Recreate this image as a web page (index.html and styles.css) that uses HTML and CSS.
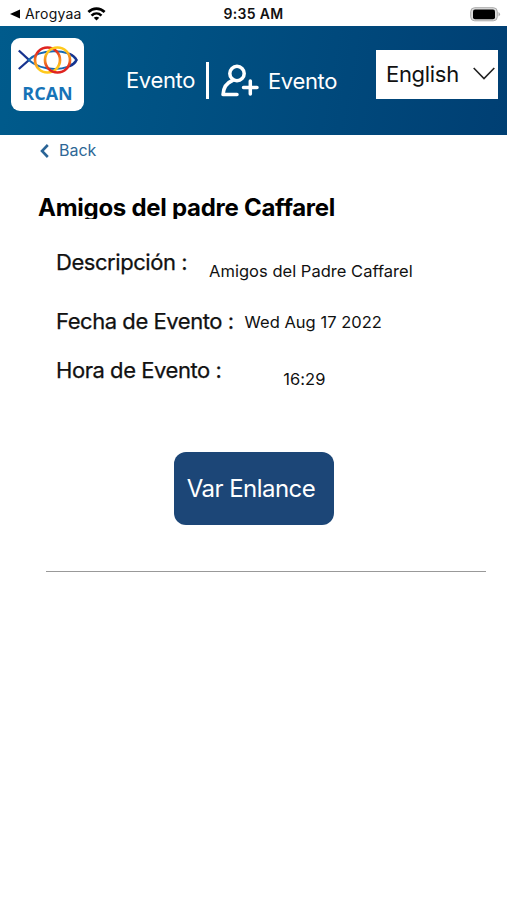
FILE: index.html
```html
<!DOCTYPE html>
<html lang="es">
<head>
    <meta charset="UTF-8">
    <meta name="viewport" content="width=device-width, initial-scale=1">
    <title>Evento</title>
    <link rel="stylesheet" href="styles.css">
</head>
<body>
    <!-- Phone status bar -->
    <div class="status-bar">
        <div class="status-left">
            <svg width="10" height="10" viewBox="0 0 10 10"><path d="M0 5L10 0.5V9.5Z"/></svg>
            <span class="carrier">Arogyaa</span>
            <svg class="wifi" width="19" height="14" viewBox="0 0 20 15" fill="none" stroke="#000" stroke-width="2.8">
                <path d="M1.3 5.4C6.2 0.5 13.8 0.5 18.7 5.4"/>
                <path d="M4.7 9.2C7.8 6.2 12.2 6.2 15.3 9.2"/>
                <path d="M10 14.5L7 11.5Q10 9.2 13 11.5Z" fill="#000" stroke="none"/>
            </svg>
        </div>
        <span class="clock">9:35 AM</span>
        <svg class="battery" width="31" height="15" viewBox="0 0 31 15">
            <rect x="0.7" y="0.7" width="26.6" height="13.1" rx="4" fill="#ddd" stroke="#aaa"/>
            <rect x="3" y="2.5" width="22" height="9.8" rx="2" fill="#000"/>
            <path d="M28.5 5Q31.5 7.2 28.5 9.5Z" fill="#aaa"/>
        </svg>
    </div>

    <header class="header">
        <div class="logo">
            <svg width="60" height="30" viewBox="0 0 60 30" fill="none">
                <defs>
                    <linearGradient id="ringLeft" x1="0.3" y1="0" x2="0.4" y2="1">
                        <stop offset="0.15" stop-color="#df2420"/>
                        <stop offset="0.5" stop-color="#f58220"/>
                        <stop offset="0.85" stop-color="#ffc91c"/>
                    </linearGradient>
                    <linearGradient id="ringRight" x1="0.4" y1="0" x2="0.5" y2="1">
                        <stop offset="0.15" stop-color="#ffc91c"/>
                        <stop offset="0.5" stop-color="#f58220"/>
                        <stop offset="0.85" stop-color="#df2420"/>
                    </linearGradient>
                </defs>
                <path d="M0.8 5.5L11 15L0.8 24" stroke="#17338f" stroke-width="2.3"/>
                <path d="M10 15.5C22 3.5 50 3 58.5 15C50 27 24 27 10 14.5" stroke="#1768b3" stroke-width="2"/>
                <path d="M51 8.5Q57 11 58.5 15Q57 19 51 21.5" stroke="#17338f" stroke-width="2.3"/>
                <circle cx="29.5" cy="15" r="12.5" stroke="url(#ringLeft)" stroke-width="2.7"/>
                <circle cx="39.5" cy="15" r="12.5" stroke="url(#ringRight)" stroke-width="2.7"/>
            </svg>
            <span class="logo-name">RCAN</span>
        </div>
        <nav class="nav">
            <span class="nav-text">Evento</span>
            <span class="nav-divider"></span>
            <svg class="add-user" width="38" height="33" viewBox="0 0 38 33" fill="none" stroke="#fff" stroke-width="3.5" stroke-linecap="round" stroke-linejoin="round">
                <circle cx="16" cy="9.5" r="7.2"/>
                <path d="M11.5 16.5C5 19 2.5 23.5 2 30.5H16"/>
                <path d="M22.5 23.5H36M29.3 17V30"/>
            </svg>
            <span class="nav-text nav-last">Evento</span>
        </nav>
        <div class="language">
            <span>English</span>
            <svg width="22" height="13" viewBox="0 0 22 13" fill="none" stroke="#222" stroke-width="1.6"><path d="M0.7 1L11 11.5L21.3 1"/></svg>
        </div>
    </header>

    <a class="back">
        <svg width="9" height="14" viewBox="0 0 9 14" fill="none" stroke="#2a6496" stroke-width="2.6"><path d="M7.8 1L2 7L7.8 13"/></svg>
        <span>Back</span>
    </a>

    <main class="event">
        <h1 class="event-title">Amigos del padre Caffarel</h1>
        <div class="row row-description">
            <span class="label">Descripción :</span>
            <span class="value">Amigos del Padre Caffarel</span>
        </div>
        <div class="row row-date">
            <span class="label">Fecha de Evento :</span>
            <span class="value">Wed Aug 17 2022</span>
        </div>
        <div class="row row-time">
            <span class="label">Hora de Evento :</span>
            <span class="value">16:29</span>
        </div>
        <button class="link-button">Var Enlance</button>
        <hr class="separator">
    </main>
</body>
</html>
```
FILE: styles.css
```css
* {
    box-sizing: border-box;
}
body {
    margin: 0;
    background: #fff;
    color: #111;
    font-family: Inter, "Liberation Sans", sans-serif;
}
svg {
    display: block;
    flex: none;
}
span {
    white-space: nowrap;
}
.status-bar {
    display: grid;
    grid-template-columns: 1fr auto 1fr;
    align-items: center;
    height: 26px;
    padding: 0 6px 0 10px;
}
.status-left {
    display: flex;
    align-items: center;
}
.carrier {
    margin-left: 5px;
    width: 57px;
    font-size: 14px;
    letter-spacing: 0.2px;
    line-height: 28px;
}
.wifi {
    margin-left: 5px;
}
.clock {
    margin-right: 4px;
    font-size: 14px;
    font-weight: 600;
    letter-spacing: 0.35px;
    line-height: 28px;
}
.battery {
    justify-self: end;
}
.header {
    display: flex;
    align-items: flex-start;
    height: 109px;
    padding: 12px 9px 0 11px;
    background: linear-gradient(100deg, #005b8c, #003f73);
}
.logo {
    display: flex;
    flex-direction: column;
    align-items: center;
    width: 73px;
    height: 73px;
    padding-top: 7px;
    border-radius: 9px;
    background: #fff;
}
.logo-name {
    margin-top: 6px;
    color: #1673b7;
    font-family: "Open Sans", sans-serif;
    font-size: 18px;
    font-weight: 700;
    line-height: 24px;
}
.nav {
    display: flex;
    align-items: center;
    height: 84px;
    margin-left: 42px;
    color: #fff;
    font-size: 22px;
    letter-spacing: -0.35px;
}
.nav-text {
    width: 69px;
}
.nav-divider {
    width: 3px;
    height: 37px;
    margin-left: 11px;
    background: #fff;
}
.add-user {
    margin-left: 12px;
}
.nav-last {
    margin-left: 9px;
    padding-top: 2px;
}
.language {
    display: flex;
    align-items: center;
    justify-content: space-between;
    width: 122px;
    height: 49px;
    margin: 12px 0 0 auto;
    padding: 0 3px 2px 10px;
    background: #fff;
    font-size: 22px;
    letter-spacing: -0.3px;
}
.back {
    display: flex;
    align-items: center;
    height: 31px;
    padding-left: 40px;
    gap: 10px;
    color: #2e6796;
    font-size: 16px;
    line-height: 31px;
}
.event {
    padding: 27px 21px 0 38px;
}
/* fixed height trims the descenders */
.event-title {
    height: 26px;
    margin: 0;
    overflow: hidden;
    color: #000;
    font-size: 24px;
    font-weight: 700;
    letter-spacing: -0.27px;
    line-height: 30px;
}
.row {
    display: flex;
    align-items: flex-start;
    padding-left: 18px;
}
.label {
    font-size: 22px;
    letter-spacing: -0.45px;
    line-height: 30px;
    -webkit-text-stroke: 0.25px #111;
}
.value {
    font-size: 16.5px;
    letter-spacing: 0.02px;
    line-height: 32px;
}
.row-description {
    height: 38px;
    margin-top: 28px;
    gap: 22px;
}
.row-date {
    height: 31px;
    margin-top: 21px;
    gap: 11px;
}
.row-time {
    height: 38px;
    margin-top: 18px;
    gap: 62px;
}
.row-description .value,
.row-time .value {
    padding-top: 8px;
}
.link-button {
    display: block;
    width: 160px;
    height: 73px;
    margin: 59px 0 0 136px;
    padding: 0 6px 0 0;
    border: none;
    border-radius: 12px;
    background: #1c4677;
    color: #fff;
    font-family: inherit;
    font-size: 24px;
    letter-spacing: -0.55px;
}
.separator {
    height: 1px;
    margin: 46px 0 0 8px;
    border: none;
    background: #999;
}
```
